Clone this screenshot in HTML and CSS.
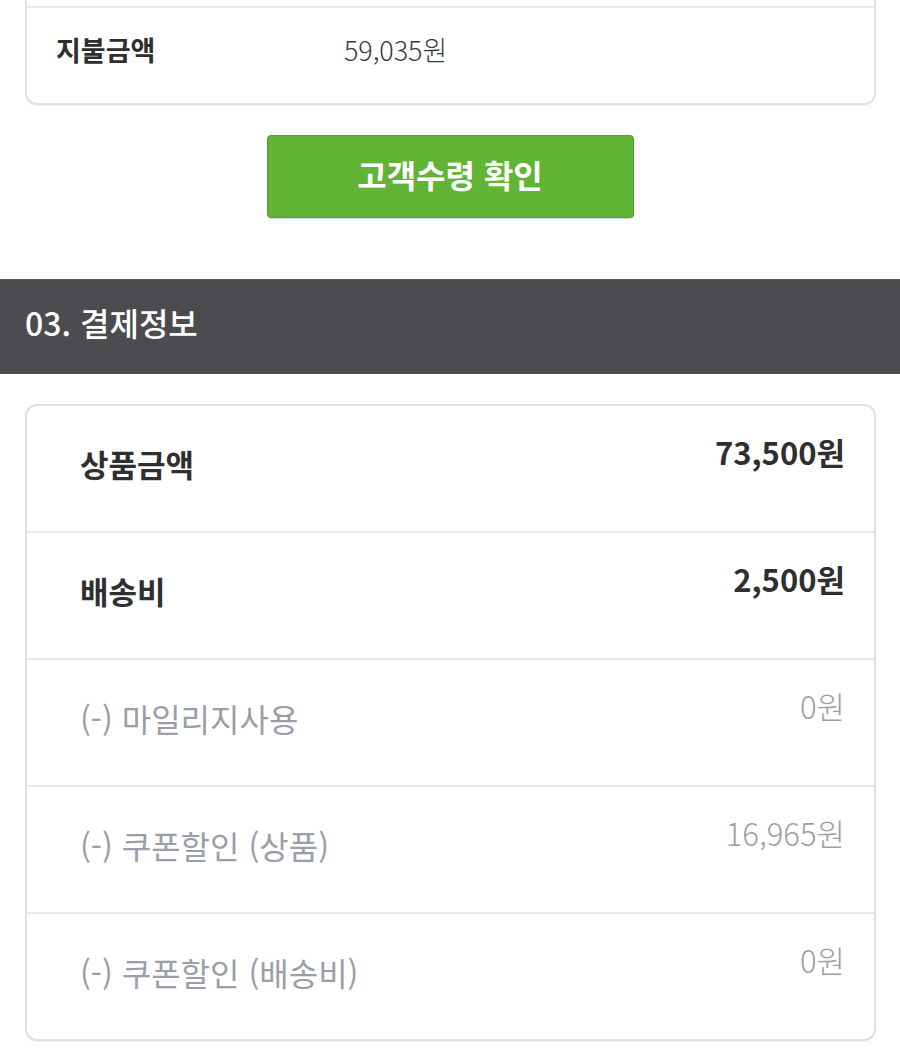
FILE: index.html
```html
<!DOCTYPE html>
<html lang="ko">
<head>
<meta charset="utf-8">
<title>결제정보</title>
<link rel="stylesheet" href="styles.css">
</head>
<body>
<div class="page">
  <div class="summary-card">
    <div class="summary-row">
      <span class="summary-label">지불금액</span>
      <span class="summary-value">59,035원</span>
    </div>
  </div>

  <div class="action">
    <button class="btn-confirm" type="button">고객수령 확인</button>
  </div>

  <div class="section-head">03. 결제정보</div>

  <div class="pay-card">
    <div class="pay-row strong">
      <span class="pay-label">상품금액</span>
      <span class="pay-value">73,500원</span>
    </div>
    <div class="pay-row strong">
      <span class="pay-label">배송비</span>
      <span class="pay-value">2,500원</span>
    </div>
    <div class="pay-row muted">
      <span class="pay-label">(-) 마일리지사용</span>
      <span class="pay-value">0원</span>
    </div>
    <div class="pay-row muted">
      <span class="pay-label">(-) 쿠폰할인 (상품)</span>
      <span class="pay-value">16,965원</span>
    </div>
    <div class="pay-row muted">
      <span class="pay-label">(-) 쿠폰할인 (배송비)</span>
      <span class="pay-value">0원</span>
    </div>
  </div>
</div>
</body>
</html>
```

FILE: styles.css
```css
* {
  box-sizing: border-box;
}

html, body {
  margin: 0;
  padding: 0;
  background: #ffffff;
}

body {
  font-family: "Noto Sans CJK KR", "Noto Sans", sans-serif;
  color: #333333;
  width: 900px;
  height: 1058px;
  overflow: hidden;
}

.page {
  display: flex;
  flex-direction: column;
}

/* top (partially visible) card */
.summary-card {
  margin: 0 24px 0 25px;
  border: 2px solid #e2e2e2;
  border-top: none;
  border-radius: 0 0 12px 12px;
  padding-top: 6px;
  box-shadow: 0 1px 1px rgba(0, 0, 0, 0.06);
}

.summary-row {
  display: flex;
  align-items: center;
  height: 97px;
  border-top: 2px solid #e8e8e8;
  padding: 0 0 12px 29px;
}

.summary-label {
  width: 288px;
  font-size: 27px;
  font-weight: 700;
  color: #2e2e2e;
}

.summary-value {
  font-size: 27px;
  font-weight: 300;
  color: #3a3a3a;
  letter-spacing: -0.1px;
}

/* confirm button */
.action {
  display: flex;
  justify-content: center;
  padding: 30px 0 61px;
}

.btn-confirm {
  width: 367px;
  height: 83px;
  border: 1px solid #4e9c2a;
  border-radius: 4px;
  background: #62b437;
  color: #ffffff;
  font-family: "Noto Sans CJK KR", "Noto Sans", sans-serif;
  font-size: 32px;
  font-weight: 700;
  padding: 0 0 6px;
  box-shadow: 0 1px 1px rgba(0, 0, 0, 0.15);
}

/* section header */
.section-head {
  height: 95px;
  background: #4c4b50;
  color: #ffffff;
  font-size: 32px;
  font-weight: 500;
  display: flex;
  align-items: center;
  padding: 0 0 10px 25px;
  border-top: 1px solid #5a595e;
}

/* payment card */
.pay-card {
  margin: 30px 24px 0 25px;
  border: 2px solid #e0e0e0;
  border-radius: 12px;
  box-shadow: 0 1px 1px rgba(0, 0, 0, 0.06);
}

.pay-row {
  display: flex;
  justify-content: space-between;
  align-items: flex-start;
  height: 127px;
  padding: 0 29px 0 53px;
  border-top: 2px solid #e8e8e8;
}

.pay-row:first-child {
  border-top: none;
  height: 125px;
}

.pay-label {
  font-size: 31px;
  line-height: 36px;
  padding-top: 40px;
}

.pay-value {
  font-size: 31px;
  line-height: 36px;
  padding-top: 28px;
}

.pay-row.strong .pay-label,
.pay-row.strong .pay-value {
  font-weight: 700;
  color: #2f2f2f;
}

.pay-row.muted .pay-label {
  font-size: 32px;
  font-weight: 400;
  color: #9a9ea8;
}

.pay-row.muted .pay-value {
  font-weight: 300;
  color: #9a9ea8;
}
```
